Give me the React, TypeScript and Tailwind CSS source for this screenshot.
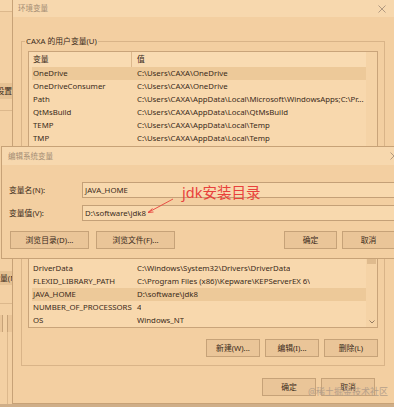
import React from "react";

function CloseX() {
  return (
    <svg width="8" height="8" viewBox="0 0 8 8" className="shrink-0">
      <path d="M0.5 0.5 L7.5 7.5 M7.5 0.5 L0.5 7.5" stroke="#a8927a" strokeWidth="0.9" fill="none" />
    </svg>
  );
}

function Row({ name, value, sel }: { name: string; value: string; sel?: boolean }) {
  return (
    <div className={`flex h-[13px] items-center whitespace-nowrap overflow-hidden ${sel ? "bg-[#edc999]" : ""}`}>
      <div className="w-[104px] shrink-0 pl-[1px] overflow-hidden">{name}</div>
      <div className="pl-[1px] overflow-hidden">{value}</div>
    </div>
  );
}

function Header() {
  return (
    <div className="flex h-[15px] items-center bg-[#f9dbb2] shrink-0">
      <div className="w-[103px] h-full flex items-center pl-[4px] border-r border-[#dcb88c]">变量</div>
      <div className="pl-[5px]">值</div>
    </div>
  );
}

function Btn({ w, children }: { w: string; children: React.ReactNode }) {
  return (
    <div className={`${w} h-[18px] shrink-0 border border-[#c6a278] bg-[#eac598] flex items-center justify-center whitespace-nowrap`}>
      {children}
    </div>
  );
}

const userVars: [string, string, boolean?][] = [
  ["OneDrive", "C:\\Users\\CAXA\\OneDrive", true],
  ["OneDriveConsumer", "C:\\Users\\CAXA\\OneDrive"],
  ["Path", "C:\\Users\\CAXA\\AppData\\Local\\Microsoft\\WindowsApps;C:\\Pr..."],
  ["QtMsBuild", "C:\\Users\\CAXA\\AppData\\Local\\QtMsBuild"],
  ["TEMP", "C:\\Users\\CAXA\\AppData\\Local\\Temp"],
  ["TMP", "C:\\Users\\CAXA\\AppData\\Local\\Temp"],
];

const sysVars: [string, string, boolean?][] = [
  ["", ""],
  ["", ""],
  ["DriverData", "C:\\Windows\\System32\\Drivers\\DriverData"],
  ["FLEXID_LIBRARY_PATH", "C:\\Program Files (x86)\\Kepware\\KEPServerEX 6\\"],
  ["JAVA_HOME", "D:\\software\\jdk8", true],
  ["NUMBER_OF_PROCESSORS", "4"],
  ["OS", "Windows_NT"],
];

export default function App() {
  return (
    <div className="relative w-[394px] h-[407px] overflow-hidden bg-[#f3d0a3] text-[7.8px] leading-[13px] text-[#3a2a1a] font-['Noto_Sans','Noto_Sans_CJK_SC',sans-serif]">
      {/* desktop / background window strip */}
      <div className="absolute inset-0 flex flex-col">
        <div className="w-[12px] h-[12px] bg-[#f6d6ab] border-b border-[#dcb88c]" />
        <div className="h-[71px]" />
        <div className="w-[12px] h-[16px] bg-[#e6c294] flex items-center justify-end overflow-hidden whitespace-nowrap">设置</div>
        <div className="w-[12px] h-[11px]" />
        <div className="w-[12px] border-t border-[#dcb88c]" />
        <div className="h-[160px]" />
        <div className="w-[12px] h-[14px] bg-[#e6c294] flex items-center overflow-hidden whitespace-nowrap">量(N</div>
        <div className="h-[18px]" />
        <div className="w-[12px] border-t border-[#dcb88c]" />
        <div className="h-[11px]" />
        <div className="flex gap-[4px] h-[17px]">
          <div className="w-[3px] bg-[#eac598] border-r border-[#c6a278]" />
          <div className="w-[5px] bg-[#eac598] border-l border-[#c6a278]" />
        </div>
        <div className="flex-1 ml-[7px] w-[5px] border-l border-[#dcb88c]" />
        <div className="h-[3px] bg-[#cfae88]" />
      </div>

      {/* 环境变量 dialog */}
      <div className="absolute left-[12px] top-0 w-[382px] h-[404px] flex flex-col bg-[#f3cfa1] border-l border-b border-[#c7a277]">
        <div className="h-[17px] shrink-0 flex items-center justify-between pl-[5px] pr-[8px] bg-[#f7d8ae] text-[7.5px] text-[#a48d74]">
          <span>环境变量</span>
          <CloseX />
        </div>
        <div className="flex flex-col pl-[8px]">
          <fieldset className="mt-[19px] w-[364px] h-[163px] border border-[#d9b488]">
            <legend className="ml-[3px] px-[1px] leading-[10px]">CAXA 的用户变量(U)</legend>
            <div className="ml-[6px] mt-[5px] w-[350px] h-[142px] border border-[#c9a47a] bg-[#f8d8ad] flex overflow-hidden">
              <div className="w-[337px] flex flex-col">
                <Header />
                <div className="flex flex-col pl-[3px]">
                  {userVars.map(([n, v, s]) => (
                    <Row key={n} name={n} value={v} sel={s} />
                  ))}
                </div>
              </div>
              <div className="w-[11px] bg-[#f5d3a6]" />
            </div>
          </fieldset>

          <fieldset className="mt-[6px] w-[364px] border border-[#d9b488] pb-[8px]">
            <legend className="ml-[3px] px-[1px] h-[10px] w-[40px]"></legend>
            <div className="ml-[6px] mt-[5px] w-[350px] h-[108px] border border-[#c9a47a] bg-[#f8d8ad] flex overflow-hidden">
              <div className="w-[337px] flex flex-col">
                <div className="h-[15px] bg-[#f9dbb2] shrink-0" />
                <div className="flex flex-col pl-[3px]">
                  {sysVars.map(([n, v, s], i) => (
                    <Row key={i} name={n} value={v} sel={s} />
                  ))}
                </div>
              </div>
              <div className="w-[11px] bg-[#f5d3a6] flex flex-col items-center justify-between">
                <div className="w-[9px] h-[43px] bg-[#dfbb8e]" />
                <svg width="6" height="4" viewBox="0 0 6 4" className="mb-[3px]">
                  <path d="M0.5 0.5 L3 3 L5.5 0.5" stroke="#7a6450" strokeWidth="0.8" fill="none" />
                </svg>
              </div>
            </div>
            <div className="mt-[11px] flex justify-end gap-[5px] pr-[6px]">
              <Btn w="w-[54px]">新建(W)...</Btn>
              <Btn w="w-[54px]">编辑(I)...</Btn>
              <Btn w="w-[54px]">删除(L)</Btn>
            </div>
          </fieldset>

          <div className="mt-[12px] flex justify-end gap-[5px] pr-[19px]">
            <Btn w="w-[54px]">确定</Btn>
            <Btn w="w-[54px]">取消</Btn>
          </div>
        </div>
      </div>

      {/* 编辑系统变量 dialog */}
      <div className="absolute left-[1px] top-[146px] w-[400px] h-[113px] flex flex-col bg-[#f3cfa1] border-l border-t border-b border-[#c7a277]">
        <div className="h-[18px] shrink-0 flex items-center justify-between pl-[6px] pr-[3px] bg-[#f7d8ae] text-[7.5px] text-[#a48d74]">
          <span>编辑系统变量</span>
          <CloseX />
        </div>
        <div className="mt-[17px] flex items-center pl-[7px] h-[16px]">
          <div className="w-[73px] shrink-0">变量名(N):</div>
          <div className="w-[330px] h-[16px] shrink-0 border border-[#c4a077] bg-[#f8d9ae] pl-[2px] flex items-center">JAVA_HOME</div>
        </div>
        <div className="mt-[7px] flex items-center pl-[7px] h-[16px]">
          <div className="w-[73px] shrink-0">变量值(V):</div>
          <div className="w-[330px] h-[16px] shrink-0 border border-[#c4a077] bg-[#f8d9ae] pl-[2px] flex items-center">D:\software\jdk8</div>
        </div>
        <div className="mt-[10px] flex pl-[8px]">
          <Btn w="w-[79px]">浏览目录(D)...</Btn>
          <div className="w-[7px] shrink-0" />
          <Btn w="w-[79px]">浏览文件(F)...</Btn>
          <div className="w-[109px] shrink-0" />
          <Btn w="w-[53px]">确定</Btn>
          <div className="w-[5px] shrink-0" />
          <Btn w="w-[53px]">取消</Btn>
        </div>
      </div>

      {/* red annotation */}
      <div className="absolute left-[182px] top-[182px] text-[14.5px] leading-[20px] text-[#e8413c] whitespace-nowrap">jdk安装目录</div>
      <svg className="absolute left-[140px] top-[195px]" width="40" height="24" viewBox="0 0 40 24">
        <path d="M33 4 L8 17.5" stroke="#e8413c" strokeWidth="0.9" fill="none" />
        <path d="M8 17.5 L12.5 13.5 M8 17.5 L13.5 17" stroke="#e8413c" strokeWidth="0.9" fill="none" />
      </svg>

      {/* watermark */}
      <div className="absolute left-[308px] top-[386px] text-[9px] leading-[12px] text-[#b6a08a] whitespace-nowrap">@稀土掘金技术社区</div>
    </div>
  );
}
